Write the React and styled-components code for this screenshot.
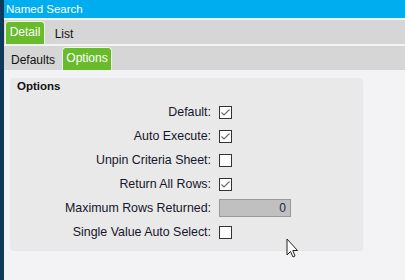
import React from "react";
import styled, { createGlobalStyle } from "styled-components";

const Global = createGlobalStyle`
  html, body { margin: 0; padding: 0; }
  body {
    width: 405px;
    height: 280px;
    overflow: hidden;
    font-family: "Liberation Sans", Arial, sans-serif;
    background: #f3f3f5;
  }
`;

const Frame = styled.div`
  position: relative;
  display: flex;
  width: 405px;
  height: 280px;
`;

const Stripe = styled.div`
  width: 4px;
  flex: none;
  background: #0d3a58;
`;

const Main = styled.div`
  flex: 1;
  display: flex;
  flex-direction: column;
  background: #f3f3f5;
`;

const TitleBar = styled.div`
  height: 18px;
  flex: none;
  background: #00aeef;
  color: #ffffff;
  font-size: 11.5px;
  line-height: 18px;
  padding-left: 2px;
`;

const TabStrip = styled.div`
  height: 24px;
  flex: none;
  margin-top: 2px;
  background: #d6d6d6;
  display: flex;
  align-items: flex-end;
  padding-left: ${(p) => p.$indent}px;
  gap: ${(p) => p.$gap}px;
`;

const Tab = styled.div`
  box-sizing: border-box;
  height: ${(p) => (p.$active ? "23px" : "24px")};
  width: ${(p) => p.$w}px;
  display: flex;
  justify-content: center;
  align-items: ${(p) => (p.$active ? "flex-start" : "center")};
  padding-top: ${(p) => (p.$active ? "3px" : "2px")};
  font-size: 12px;
  line-height: 14px;
  color: ${(p) => (p.$active ? "#ffffff" : "#111111")};
  background: ${(p) => (p.$active ? "#68bb2b" : "transparent")};
  border: ${(p) => (p.$active ? "1px solid #eaf5e0" : "1px solid transparent")};
  border-bottom: none;
  border-radius: 4px 4px 0 0;
`;

const Content = styled.div`
  flex: 1;
  padding: 8px 43px 0 6px;
`;

const Panel = styled.div`
  background: #e9e9e9;
  border-radius: 3px;
  box-shadow: 1px 1px 1px rgba(0, 0, 0, 0.06);
  padding: 1px 0 6px 7px;
`;

const Heading = styled.div`
  font-size: 11.5px;
  font-weight: bold;
  line-height: 14px;
  color: #111111;
`;

const Form = styled.div`
  margin-top: 7px;
  display: grid;
  grid-template-columns: 194px auto;
  grid-auto-rows: 24px;
  column-gap: 8px;
  align-items: center;
`;

const Label = styled.div`
  text-align: right;
  font-size: 12.4px;
  color: #16162a;
  white-space: nowrap;
`;

const Box = styled.div`
  width: 13px;
  height: 13px;
  box-sizing: border-box;
  border: 1px solid #333333;
  background: #ffffff;
  display: flex;
  align-items: center;
  justify-content: center;
`;

const NumberField = styled.div`
  box-sizing: border-box;
  width: 72px;
  height: 18px;
  background: #c0c0c0;
  border: 1px solid #999999;
  font-size: 12px;
  line-height: 16px;
  text-align: right;
  padding-right: 4px;
  color: #1a2a40;
`;

const Cursor = styled.svg`
  position: absolute;
  left: 286px;
  top: 238px;
`;

const Check = ({ on }) => (
  <Box>
    {on && (
      <svg width="11" height="11" viewBox="0 0 11 11">
        <path d="M1.5 5.5 L4 8 L9.5 2.5" fill="none" stroke="#6a6a6a" strokeWidth="1.2" />
      </svg>
    )}
  </Box>
);

const rows = [
  { label: "Default:", type: "check", on: true },
  { label: "Auto Execute:", type: "check", on: true },
  { label: "Unpin Criteria Sheet:", type: "check", on: false },
  { label: "Return All Rows:", type: "check", on: true },
  { label: "Maximum Rows Returned:", type: "number", value: "0" },
  { label: "Single Value Auto Select:", type: "check", on: false },
];

export default function App() {
  return (
    <>
      <Global />
      <Frame>
        <Stripe />
        <Main>
          <TitleBar>Named Search</TitleBar>
          <TabStrip $indent={1} $gap={2}>
            <Tab $active $w={40}>Detail</Tab>
            <Tab $w={34}>List</Tab>
          </TabStrip>
          <TabStrip $indent={0} $gap={0}>
            <Tab $w={58}>Defaults</Tab>
            <Tab $active $w={50}>Options</Tab>
          </TabStrip>
          <Content>
            <Panel>
              <Heading>Options</Heading>
              <Form>
                {rows.map((r) => (
                  <React.Fragment key={r.label}>
                    <Label>{r.label}</Label>
                    {r.type === "check" ? (
                      <Check on={r.on} />
                    ) : (
                      <NumberField>{r.value}</NumberField>
                    )}
                  </React.Fragment>
                ))}
              </Form>
            </Panel>
          </Content>
        </Main>
        <Cursor width="13" height="21" viewBox="0 0 13 21">
          <path
            d="M1 1 L1 17 L4.5 13.5 L7 19 L9 18 L6.8 12.5 L11.5 12.5 Z"
            fill="#ffffff"
            stroke="#222222"
            strokeWidth="1"
            strokeLinejoin="round"
          />
        </Cursor>
      </Frame>
    </>
  );
}
